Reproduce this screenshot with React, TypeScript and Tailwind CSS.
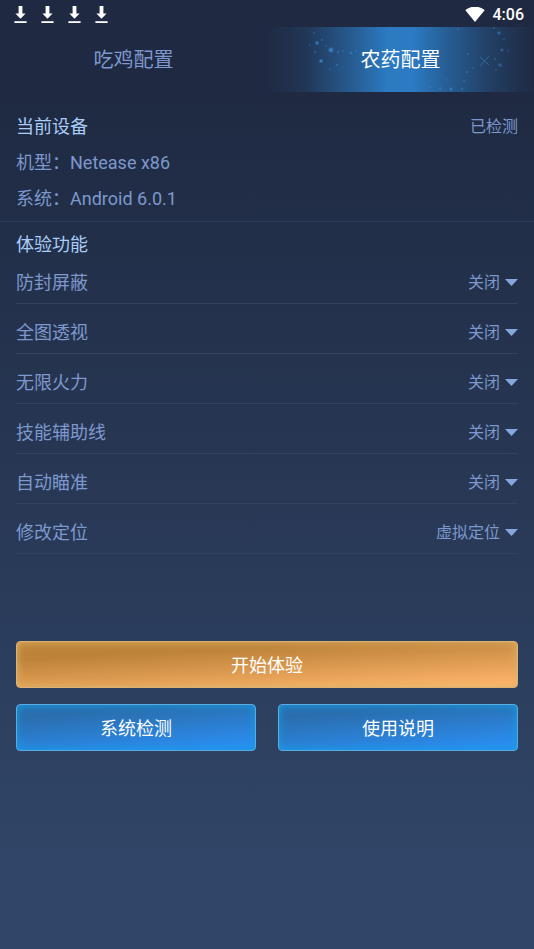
import { useState } from "react";

const features = [
  { id: "shield", label: "防封屏蔽", options: ["关闭", "开启"] },
  { id: "vision", label: "全图透视", options: ["关闭", "开启"] },
  { id: "fire", label: "无限火力", options: ["关闭", "开启"] },
  { id: "guide", label: "技能辅助线", options: ["关闭", "开启"] },
  { id: "aim", label: "自动瞄准", options: ["关闭", "开启"] },
  { id: "location", label: "修改定位", options: ["虚拟定位", "关闭"] },
];

const sparks = [
  [47, 6, 1.5, 0.5], [43, 18, 1.2, 0.5], [50, 16, 2.4, 0.8], [55, 13, 1.3, 0.6],
  [64, 23, 3.2, 0.9], [71, 25, 1.6, 0.6], [54, 34, 2.4, 0.9], [70, 38, 1.5, 0.6],
  [63, 42, 1.2, 0.5], [59, 19, 1.2, 0.5], [76, 24, 1.2, 0.5], [84, 26, 1.8, 0.6],
  [89, 24, 1.2, 0.5], [48, 25, 1.4, 0.5], [101, 9, 1.2, 0.4], [103, 28, 1.2, 0.5],
  [227, 1, 1.2, 0.6], [232, 6, 2.3, 0.6], [237, 12, 1.2, 0.5], [235, 23, 2, 0.6],
  [228, 32, 1.4, 0.5], [233, 38, 2.6, 0.5], [241, 24, 1.2, 0.4], [229, 43, 1.2, 0.5],
  [201, 27, 1.4, 0.5], [206, 41, 1.2, 0.5], [200, 45, 1.4, 0.6], [197, 54, 1.2, 0.6],
  [195, 62, 1.6, 0.6], [184, 62, 2.2, 0.6], [173, 62, 1.5, 0.6], [163, 60, 1.2, 0.6],
  [191, 2, 1.4, 0.5], [180, 53, 1.2, 0.4],
];

function DownloadIcon() {
  return (
    <svg className="h-[18px] w-[13px]" viewBox="0 0 13 18" fill="#fff" aria-hidden="true">
      <path d="M4.600 0h3.800v7.600h3.200L6.500 12.800 1.400 7.600h3.200z" />
      <path d="M.4 15.200h12.200v1.800H.4z" />
    </svg>
  );
}

function Sparkles() {
  return (
    <svg className="absolute inset-0 h-full w-full" viewBox="0 0 267 65" preserveAspectRatio="none" aria-hidden="true">
      <defs>
        <radialGradient id="spark">
          <stop offset="0" stopColor="#4aa3e6" />
          <stop offset="1" stopColor="#2f83cb" stopOpacity="0.1" />
        </radialGradient>
      </defs>
      {sparks.map(([x, y, r, opacity]) => (
        <circle key={`${x}-${y}`} cx={x} cy={y} r={r} fill="url(#spark)" opacity={opacity} />
      ))}
      <path d="M213 30l9 8M222 29l-9 10" stroke="#3f87c0" strokeWidth="1" opacity="0.6" />
    </svg>
  );
}

export default function App() {
  const [tab, setTab] = useState(1);
  return (
    <div className="flex min-h-screen flex-col bg-linear-to-b from-[#1f2a42] from-10% to-[#304567] to-90% font-[Roboto,'Noto_Sans_CJK_SC',sans-serif] text-lg text-[#7d98cd]">
      <header className="flex h-[27px] items-center justify-between pr-2.5 pl-3.5">
        <div className="flex gap-3.5 pt-0.5">
          <DownloadIcon />
          <DownloadIcon />
          <DownloadIcon />
          <DownloadIcon />
        </div>
        <div className="flex items-center gap-2 pt-0.5 text-base font-medium text-white">
          <svg className="h-4 w-5" viewBox="0 0 20 16" fill="#fff" aria-hidden="true">
            <path d="M10 15L.4 3.200C3 .8 6.300-.3 10-.3s7 1.100 9.600 3.500z" />
          </svg>
          <span>4:06</span>
        </div>
      </header>

      <nav className="grid h-[65px] grid-cols-2 text-xl">
        {["吃鸡配置", "农药配置"].map((name, i) => (
          <button
            key={name}
            type="button"
            aria-pressed={tab === i}
            onClick={() => setTab(i)}
            className={
              tab === i
                ? "relative bg-[linear-gradient(90deg,#2b7ac200_0%,#2b7ac226_14%,#2b7ac2a6_33%,#2b7ac2_45%,#2b7ac2_55%,#2b7ac2a6_67%,#2b7ac240_84%,#2b7ac200_100%)] text-white"
                : "relative"
            }
          >
            {tab === i && <Sparkles />}
            <span className="relative">{name}</span>
          </button>
        ))}
      </nav>

      <section className="border-b border-[#2b3a57] px-4 pt-[17px] pb-1 leading-9">
        <div className="flex items-center justify-between">
          <h2 className="text-[#a9cdf8]">当前设备</h2>
          <span className="text-base leading-9">已检测</span>
        </div>
        <p>机型：Netease x86</p>
        <p>系统：Android 6.0.1</p>
      </section>

      <main className="px-4">
        <h2 className="pt-3.5 leading-[18px] text-[#a9cdf8]">体验功能</h2>
        {features.map(({ id, label, options }) => (
          <div key={id} className="flex h-[50px] items-center justify-between border-b border-[#33435f] pt-2 last-of-type:border-[#2f3f5e]">
            <label htmlFor={id}>{label}</label>
            <div className="relative flex items-center">
              <select id={id} className="field-sizing-content cursor-pointer appearance-none bg-transparent pr-[18px] text-base">
                {options.map((option) => (
                  <option key={option}>{option}</option>
                ))}
              </select>
              <svg className="pointer-events-none absolute right-0 h-[7px] w-[13px]" viewBox="0 0 13 7" fill="#86a6de" aria-hidden="true">
                <path d="M0 0h13L6.500 7z" />
              </svg>
            </div>
          </div>
        ))}

        <div className="mt-[87px] grid grid-cols-2 gap-x-[22px] gap-y-4 text-white">
          <button
            type="button"
            className="col-span-2 h-[47px] rounded border border-[#dcb272] bg-linear-177 from-[#bd8338] from-25% to-[#ffb46b] to-95% pt-0.5 shadow-[inset_0_0_9px_#dcb468]"
          >
            开始体验
          </button>
          <button
            type="button"
            className="h-[47px] rounded border border-[#5cabe0] bg-linear-175 from-[#2a6eae] from-20% to-[#2b8df0] to-90% pt-0.5 shadow-[inset_0_0_9px_#129fe2]"
          >
            系统检测
          </button>
          <button
            type="button"
            className="h-[47px] rounded border border-[#5cabe0] bg-linear-175 from-[#2a6eae] from-20% to-[#2b8df0] to-90% pt-0.5 shadow-[inset_0_0_9px_#129fe2]"
          >
            使用说明
          </button>
        </div>
      </main>
    </div>
  );
}
